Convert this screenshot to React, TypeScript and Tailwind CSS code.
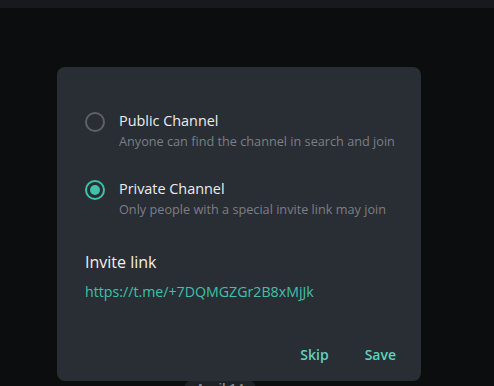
import { useState } from "react"

function Radio({ checked }: { checked: boolean }) {
    return (
        <div className={`w-5 h-5 rounded-full border-2 flex items-center justify-center shrink-0 ${checked ? "border-[#3fc1aa]" : "border-[#5e6166]"}`}>
            {checked && <div className="w-[10px] h-[10px] rounded-full bg-[#3fc1aa]"></div>}
        </div>
    )
}

export default function App() {
    const [priv, setPriv] = useState(true)

    const options = [
        { title: "Public Channel", desc: "Anyone can find the channel in search and join", value: false },
        { title: "Private Channel", desc: "Only people with a special invite link may join", value: true },
    ]

    return (
        <div className="relative w-[494px] h-[386px] overflow-hidden bg-[#0c0d0f] font-['Open_Sans',sans-serif] select-none">
            <div className="h-2 bg-[#17191c]"></div>
            <div className="flex justify-center pt-[370px] pr-[54px]">
                <div className="w-[72px] h-6 rounded-full bg-[#1e2126] text-[#8a8d92] text-[13px] font-semibold text-center leading-5">April 14</div>
            </div>

            <div className="absolute left-[57px] top-[67px] w-[364px] h-[314px] rounded-lg bg-[#292d34] flex flex-col px-7 pt-[44px]">
                <div className="flex flex-col gap-[28px]">
                    {options.map((o) => (
                        <div key={o.title} onClick={() => setPriv(o.value)} className="flex items-start gap-[14px] cursor-pointer">
                            <div className="pt-[1px]"><Radio checked={priv === o.value} /></div>
                            <div className="flex flex-col whitespace-nowrap">
                                <span className="text-[14.4px] leading-[20px] text-[#ececec]">{o.title}</span>
                                <span className="text-[12.7px] leading-[20px] text-[#7c7f84]">{o.desc}</span>
                            </div>
                        </div>
                    ))}
                </div>

                <div className="mt-[32px] text-[16px] leading-[22px] text-[#f3efe9]">Invite link</div>
                <div className="mt-[9px] text-[14.2px] leading-[20px] text-[#3fc1aa]">https://t.me/+7DQMGZGr2B8xMjJk</div>

                <div className="mt-auto mb-[16px] -mr-[3px] flex justify-end gap-[36px] text-[14px] font-semibold text-[#5fd3bc]">
                    <button className="cursor-pointer">Skip</button>
                    <button className="cursor-pointer">Save</button>
                </div>
            </div>
        </div>
    )
}
